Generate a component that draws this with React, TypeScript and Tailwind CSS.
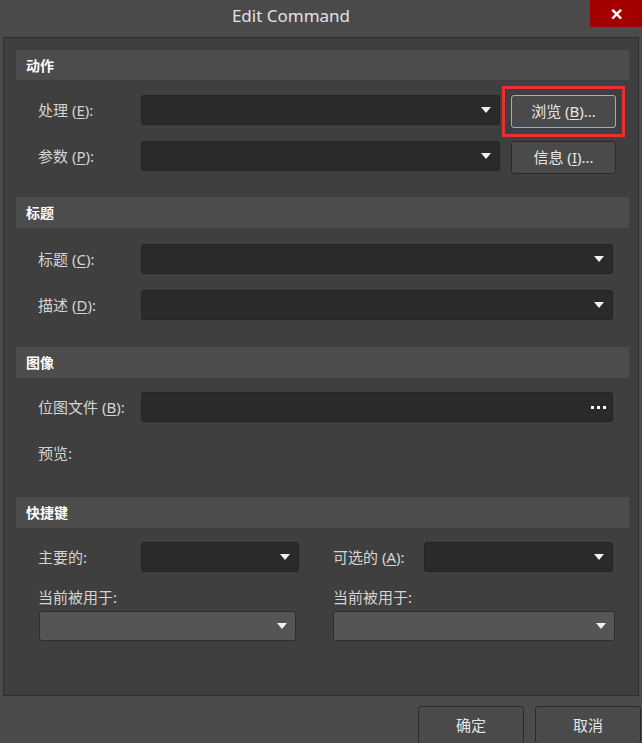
import type { ReactNode } from "react";

const FONT = "font-['Noto_Sans','Noto_Sans_CJK_SC',sans-serif]";

function Arrow() {
  return (
    <svg width="10" height="6" viewBox="0 0 10 6" className="shrink-0">
      <path d="M0 0h10L5 6z" fill="#f2f2f2" />
    </svg>
  );
}

function Combo({ className = "", light = false }: { className?: string; light?: boolean }) {
  return (
    <div
      className={`h-[30px] rounded-[3px] border flex items-center justify-end pr-[8px] ${
        light ? "bg-[#555555] border-[#2e2e2e]" : "bg-[#2a2a2a] border-[#242424]"
      } ${className}`}
    >
      <Arrow />
    </div>
  );
}

function Btn({ children, className = "" }: { children: ReactNode; className?: string }) {
  return (
    <div
      className={`flex items-center justify-center rounded-[3px] border bg-[#4a4a4a] text-[15px] text-[#e6e6e6] ${className}`}
    >
      {children}
    </div>
  );
}

function Header({ title }: { title: string }) {
  return (
    <div className="h-[31px] bg-[#4c4c4c] flex items-center pl-[10px] text-[14px] font-bold text-white">
      {title}
    </div>
  );
}

function Label({ text, k, className = "" }: { text: string; k?: string; className?: string }) {
  return (
    <div className={`text-[15px] text-[#d4d4d4] leading-[30px] ${className}`}>
      {text}
      {k && (
        <>
          {" "}(<span className="underline underline-offset-2">{k}</span>):
        </>
      )}
      {!k && ":"}
    </div>
  );
}

export default function App() {
  return (
    <div className={`w-[642px] h-[743px] bg-[#4b4b4b] flex flex-col overflow-hidden ${FONT}`}>
      {/* title bar */}
      <div className="h-[37px] flex items-start shrink-0">
        <div className="flex-1 h-[32px] flex items-center justify-center text-[17px] text-[#e2e2e2] pr-[8px]">
          Edit Command
        </div>
        <div className="w-[52px] h-[27px] bg-[#a30000] flex items-center justify-center text-white text-[16px] font-bold">
          ✕
        </div>
      </div>

      {/* main panel */}
      <div className="mx-[3px] h-[659px] shrink-0 border border-[#2f2f2f] bg-[#3f3f3f] pt-[12px] pl-[12px] pr-[9px]">
        {/* 动作 */}
        <div className="h-[30px] bg-[#4c4c4c] flex items-center pl-[10px] text-[14px] font-bold text-white">
          动作
        </div>
        <div className="pl-[22px] mt-[15px] flex flex-col gap-[13px]">
          <div className="flex items-start">
            <Label text="处理" k="E" className="w-[103px]" />
            <Combo className="w-[359px]" />
            <div className="ml-[11px] w-[105px] h-[33px] outline outline-[3px] outline-[#e8302f] outline-offset-[6px]">
              <Btn className="w-full h-full border-[#8fb1d6]">
                浏览 (<span className="underline underline-offset-2">B</span>)...
              </Btn>
            </div>
          </div>
          <div className="flex items-start">
            <Label text="参数" k="P" className="w-[103px]" />
            <Combo className="w-[359px]" />
            <Btn className="ml-[11px] w-[105px] h-[33px] border-[#2a2a2a]">
              信息 (<span className="underline underline-offset-2">I</span>)...
            </Btn>
          </div>
        </div>

        {/* 标题 */}
        <div className="mt-[23px]">
          <Header title="标题" />
        </div>
        <div className="pl-[22px] pr-[16px] mt-[16px] flex flex-col gap-[16px]">
          <div className="flex items-start">
            <Label text="标题" k="C" className="w-[103px]" />
            <Combo className="flex-1" />
          </div>
          <div className="flex items-start">
            <Label text="描述" k="D" className="w-[103px]" />
            <Combo className="flex-1" />
          </div>
        </div>

        {/* 图像 */}
        <div className="mt-[27px]">
          <Header title="图像" />
        </div>
        <div className="pl-[22px] pr-[16px] mt-[14px] flex flex-col gap-[16px]">
          <div className="flex items-start">
            <Label text="位图文件" k="B" className="w-[103px]" />
            <div className="flex-1 h-[30px] rounded-[3px] border border-[#242424] bg-[#2a2a2a] flex items-center justify-end pr-[6px] gap-[3px]">
              <span className="w-[3px] h-[3px] bg-white" />
              <span className="w-[3px] h-[3px] bg-white" />
              <span className="w-[3px] h-[3px] bg-white" />
            </div>
          </div>
          <Label text="预览" />
        </div>

        {/* 快捷键 */}
        <div className="mt-[29px]">
          <Header title="快捷键" />
        </div>
        <div className="pl-[22px] pr-[16px] mt-[14px]">
          <div className="flex items-start">
            <Label text="主要的" className="w-[103px]" />
            <Combo className="w-[158px]" />
            <Label text="可选的" k="A" className="ml-[34px] w-[91px]" />
            <Combo className="flex-1" />
          </div>
          <div className="flex mt-[14px] gap-[37px]">
            <div className="w-[258px] flex flex-col">
              <div className="text-[15px] text-[#d4d4d4] leading-[22px]">当前被用于:</div>
              <Combo light className="mt-[3px] ml-[1px]" />
            </div>
            <div className="flex-1 flex flex-col">
              <div className="text-[15px] text-[#d4d4d4] leading-[22px]">当前被用于:</div>
              <Combo light className="mt-[3px] -mr-[2px]" />
            </div>
          </div>
        </div>
      </div>

      {/* footer buttons */}
      <div className="flex justify-end gap-[11px] pt-[10px] pr-[1px]">
        <Btn className="w-[106px] h-[38px] border-[#2a2a2a]">确定</Btn>
        <Btn className="w-[106px] h-[38px] border-[#2a2a2a]">取消</Btn>
      </div>
    </div>
  );
}
